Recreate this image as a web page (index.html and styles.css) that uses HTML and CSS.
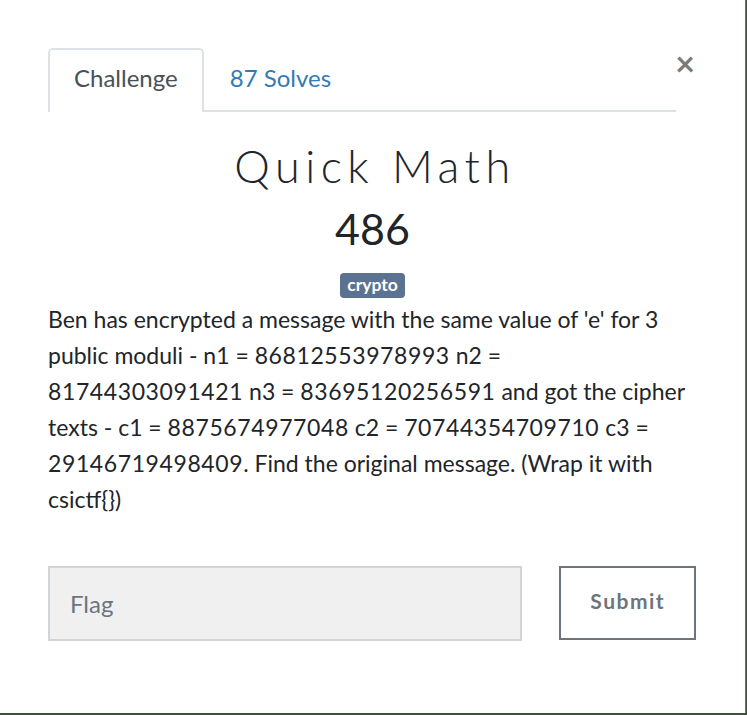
FILE: index.html
```html
<!DOCTYPE html>
<html>
<head>
<meta charset="utf-8">
<link rel="stylesheet" href="styles.css">
</head>
<body>
<div class="modal">
  <span class="close">&times;</span>
  <nav class="tabs">
    <div class="tab active">Challenge</div>
    <div class="tab link">87 Solves</div>
  </nav>
  <div class="content">
    <h2 class="title">Quick Math</h2>
    <h3 class="value">486</h3>
    <span class="badge">crypto</span>
    <p class="desc">Ben has encrypted a message with the same value of 'e' for 3 public moduli - n1 = <span class="num">86812553978993</span> n2 = <span class="num">81744303091421</span> n3 = <span class="num">83695120256591</span> and got the cipher texts - c1 = <span class="num">8875674977048</span> c2 = <span class="num">70744354709710</span> c3 = <span class="num">29146719498409</span>. Find the original message. (Wrap it with csictf{})</p>
  </div>
  <form class="submit-row">
    <input class="flag" type="text" placeholder="Flag">
    <button class="btn" type="button">Submit</button>
  </form>
</div>
</body>
</html>
```
FILE: styles.css
```css
html, body {
  margin: 0;
  padding: 0;
  background: #3f503d;
  height: 100%;
}
.modal {
  position: relative;
  box-sizing: border-box;
  width: 746px;
  height: 713px;
  background: #fff;
  border-right: 1px solid #6e6e6e;
  padding: 48px 48px 0 48px;
  font-family: Lato, "Open Sans", sans-serif;
  color: #212529;
}
.close {
  position: absolute;
  top: 46px;
  right: 50px;
  font-size: 34px;
  font-weight: 700;
  color: #7a7a7a;
  line-height: 1;
}
.tabs {
  display: flex;
  border-bottom: 2px solid #dee2e6;
  margin-right: 21px;
}
.tab {
  font-size: 24px;
  padding: 0 24px;
  height: 60px;
  line-height: 56px;
  margin-bottom: -2px;
  border: 2px solid transparent;
  border-bottom: none;
  border-radius: 5px 5px 0 0;
}
.tab.active {
  border-color: #dee2e6;
  color: #495057;
  background: #fff;
  height: 62px;
}
.tab.link {
  color: #337ab7;
}
.content {
  display: flex;
  flex-direction: column;
  align-items: center;
}
.title {
  margin: 26px 0 0 0;
  font-size: 45px;
  font-weight: 300;
  letter-spacing: 5.5px;
  line-height: 56px;
  padding-left: 5px;
}
.value {
  margin: 11px 0 0 0;
  font-size: 43px;
  font-weight: 400;
  line-height: 48px;
}
.badge {
  margin-top: 20px;
  background: #5b7290;
  color: #fff;
  font-weight: 700;
  font-size: 17.5px;
  padding: 0 7px;
  height: 25px;
  line-height: 24px;
  border-radius: 4px;
}
.desc {
  align-self: stretch;
  margin: 3px 0 0 0;
  font-size: 23px;
  line-height: 36px;
}
.num {
  letter-spacing: 0.6px;
}
.submit-row {
  display: flex;
  gap: 37px;
  margin-top: 49px;
  margin-right: 1px;
}
.flag {
  box-sizing: border-box;
  width: 476px;
  height: 75px;
  background: #f0f0f0;
  border: 2px solid #d0d5da;
  padding: 0 20px;
  font-family: Lato, sans-serif;
  font-size: 24px;
  color: #495057;
  outline: none;
}
.flag::placeholder {
  color: #6c757d;
}
.btn {
  box-sizing: border-box;
  width: 137px;
  height: 74px;
  background: #fff;
  border: 2px solid #6c757d;
  color: #6c757d;
  font-family: Lato, sans-serif;
  font-size: 21px;
  font-weight: 700;
  letter-spacing: 1.5px;
  padding: 0 0 6px 0;
}
```
